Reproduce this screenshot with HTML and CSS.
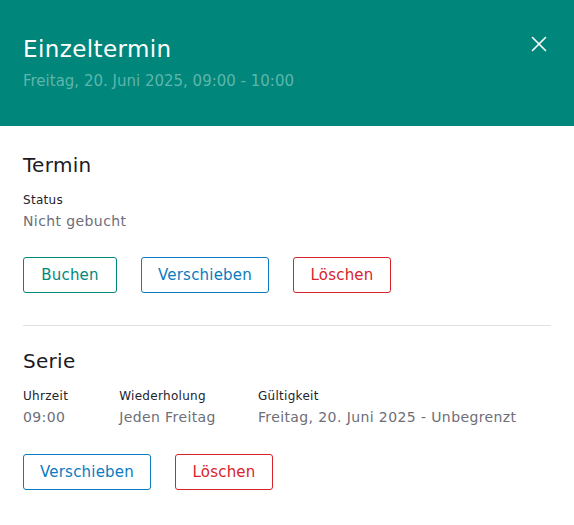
FILE: index.html
```html
<!DOCTYPE html>
<html lang="de">
<head>
<meta charset="utf-8">
<title>Einzeltermin</title>
<link rel="stylesheet" href="styles.css">
</head>
<body>
<div class="dialog">
  <header class="dlg-header">
    <div class="dlg-titles">
      <h1 class="dlg-title">Einzeltermin</h1>
      <div class="dlg-sub">Freitag, 20. Juni 2025, 09:00 - 10:00</div>
    </div>
    <button class="close" aria-label="Schließen">
      <svg width="16" height="16" viewBox="0 0 16 16"><path d="M1.5 1.5 L14.5 14.5 M14.5 1.5 L1.5 14.5" stroke="#fff" stroke-width="1.6" fill="none" stroke-linecap="round"/></svg>
    </button>
  </header>
  <main class="dlg-body">
    <section class="sec sec-first">
      <h2 class="sec-title">Termin</h2>
      <div class="fields">
        <div class="field">
          <div class="f-label">Status</div>
          <div class="f-value">Nicht gebucht</div>
        </div>
      </div>
      <div class="actions">
        <button class="btn btn-teal">Buchen</button>
        <button class="btn btn-blue">Verschieben</button>
        <button class="btn btn-red">Löschen</button>
      </div>
    </section>
    <hr class="divider">
    <section class="sec">
      <h2 class="sec-title">Serie</h2>
      <div class="fields">
        <div class="field f1">
          <div class="f-label">Uhrzeit</div>
          <div class="f-value">09:00</div>
        </div>
        <div class="field f2">
          <div class="f-label">Wiederholung</div>
          <div class="f-value">Jeden Freitag</div>
        </div>
        <div class="field">
          <div class="f-label">Gültigkeit</div>
          <div class="f-value">Freitag, 20. Juni 2025 - Unbegrenzt</div>
        </div>
      </div>
      <div class="actions">
        <button class="btn btn-blue">Verschieben</button>
        <button class="btn btn-red">Löschen</button>
      </div>
    </section>
  </main>
</div>
</body>
</html>
```
FILE: styles.css
```css
* { box-sizing: border-box; }
html, body { margin: 0; padding: 0; background: #fff; }
body {
  font-family: "DejaVu Sans", "Open Sans", sans-serif;
  color: #1b1b24;
  width: 574px;
}
.dlg-header {
  background: #00867a;
  height: 126px;
  padding: 32px 23px 0 23px;
  display: flex;
  justify-content: space-between;
  align-items: flex-start;
}
.dlg-title {
  margin: 0;
  font-size: 23px;
  font-weight: 400;
  line-height: 34px;
  letter-spacing: 0.4px;
  color: #fff;
}
.dlg-sub {
  margin-top: 5px;
  font-size: 15px;
  line-height: 20px;
  color: #5db6ad;
}
.close {
  background: none;
  border: 0;
  padding: 0;
  margin: 4px 4px 0 0;
  width: 16px;
  height: 16px;
  cursor: pointer;
}
.close svg { display: block; }
.dlg-body { padding: 0 23px; }
.sec-first { padding-top: 25px; }
.sec-title {
  margin: 0;
  font-size: 20px;
  font-weight: 400;
  line-height: 28px;
  letter-spacing: 0.3px;
}
.fields {
  display: flex;
  margin-top: 12px;
}
.f1 { margin-right: 51px; }
.f2 { margin-right: 42px; }
.f-label { font-size: 12px; line-height: 18px; color: #22222c; letter-spacing: 0.3px; }
.f-value { margin-top: 1px; font-size: 14px; line-height: 22px; color: #6e6e78; letter-spacing: 0.4px; }
.actions {
  display: flex;
  gap: 24px;
  margin-top: 25px;
}
.btn {
  height: 36px;
  padding: 0;
  background: #fff;
  border: 1px solid;
  border-radius: 3px;
  font-family: inherit;
  font-size: 15px;
  letter-spacing: 0.2px;
}
.btn-teal { color: #00897b; border-color: #00897b; width: 94px; }
.btn-blue { color: #0b7bc0; border-color: #0b7bc0; width: 128px; }
.btn-red { color: #d8232a; border-color: #d8232a; width: 98px; }
.divider {
  margin: 32px 0 0 0;
  border: 0;
  border-top: 1px solid #e2e2e4;
  height: 0;
}
.divider + .sec { padding-top: 21px; }
.divider + .sec .actions { margin-top: 26px; }
```
